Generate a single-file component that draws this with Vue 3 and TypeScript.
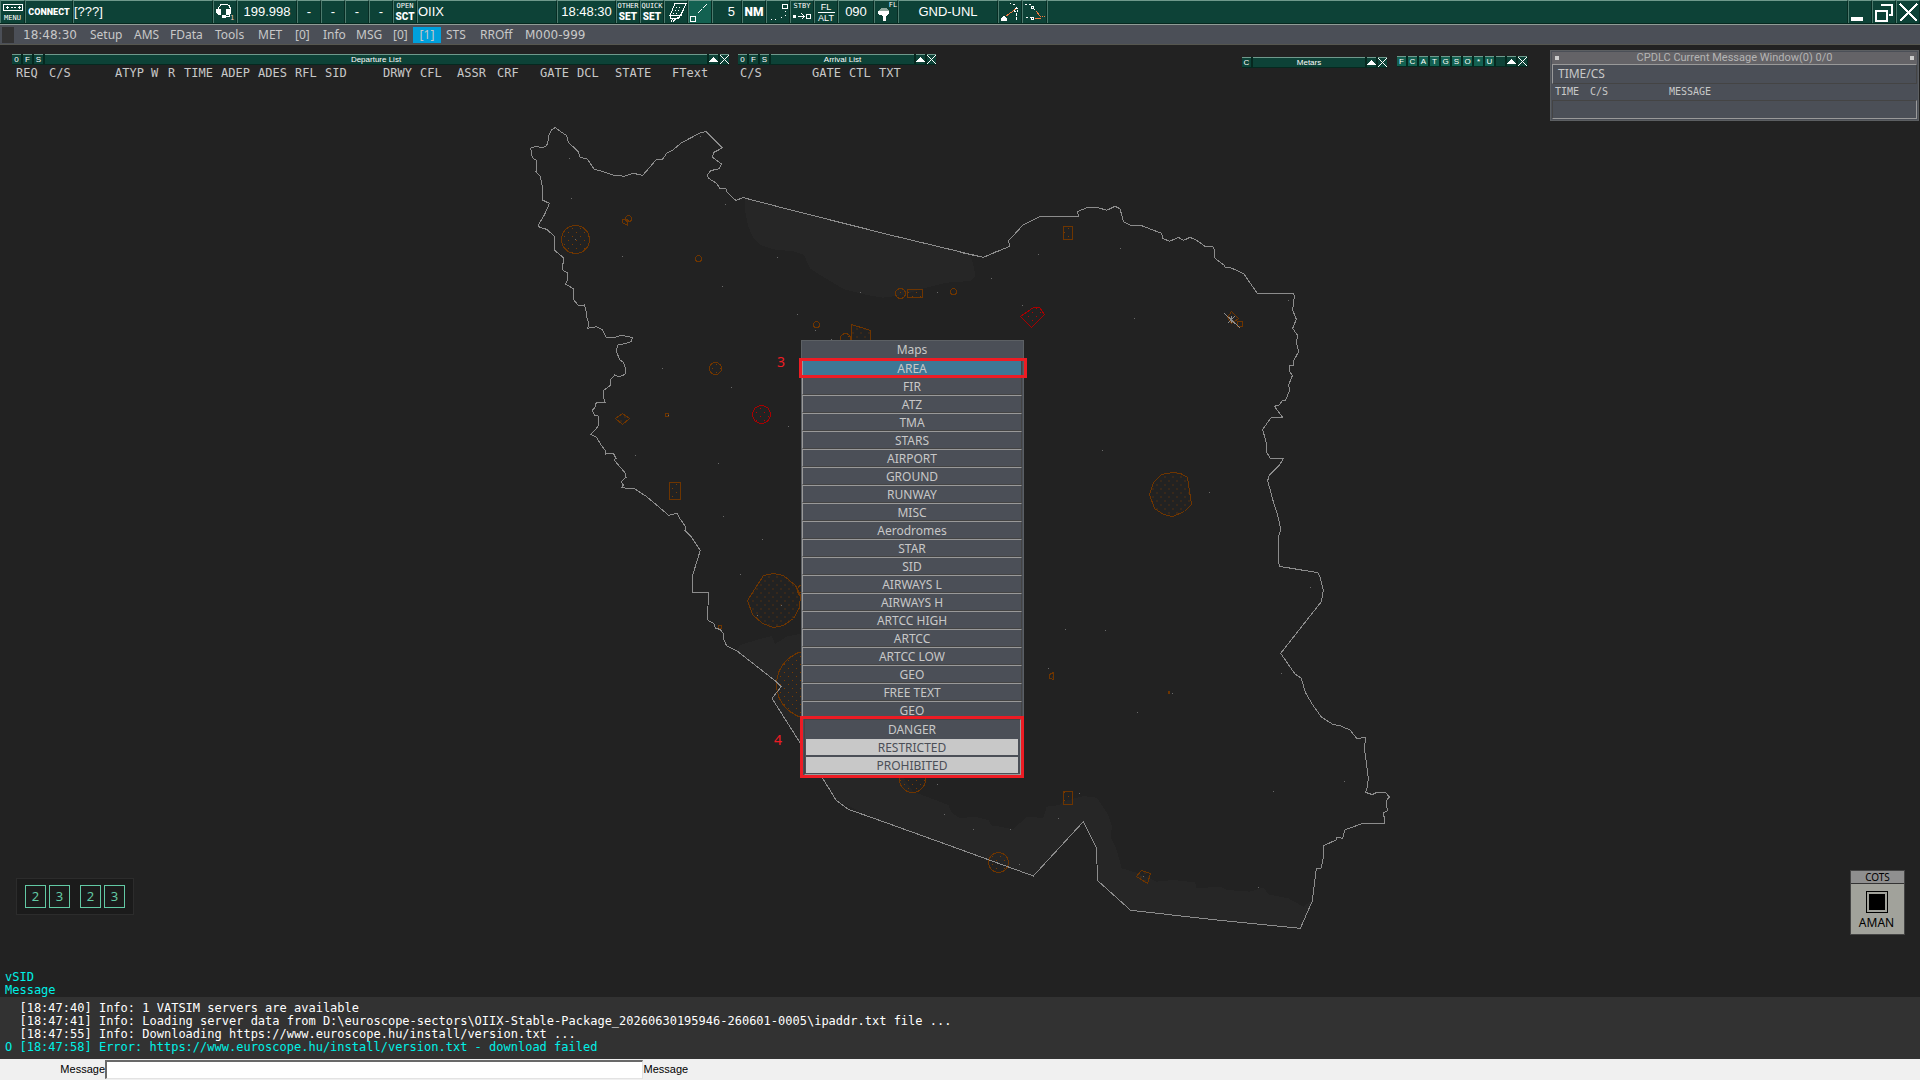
<script setup lang="ts">
import { ref } from 'vue'

interface Tile { x: number; y: number; points: string }

const message = ref('')

const menu = [
  { text: '18:48:30', kind: 'wide' }, { text: 'Setup' }, { text: 'AMS' }, { text: 'FData' },
  { text: 'Tools' }, { text: 'MET' }, { text: '[0]' }, { text: 'Info' }, { text: 'MSG' },
  { text: '[0]' }, { text: '[1]', kind: 'active' }, { text: 'STS' }, { text: 'RROff' },
  { text: 'M000-999', kind: 'wide' },
]

const departureColumns = ['REQ', 'C/S', 'ATYP', 'W', 'R', 'TIME', 'ADEP', 'ADES', 'RFL', 'SID', 'DRWY',
  'CFL', 'ASSR', 'CRF', 'GATE', 'DCL', 'STATE', 'FText']
const arrivalColumns = ['C/S', 'GATE', 'CTL', 'TXT']
const filters = ['F', 'C', 'A', 'T', 'G', 'S', 'O', '*', 'U', '']

const maps = ['AREA', 'FIR', 'ATZ', 'TMA', 'STARS', 'AIRPORT', 'GROUND', 'RUNWAY', 'MISC', 'Aerodromes',
  'STAR', 'SID', 'AIRWAYS L', 'AIRWAYS H', 'ARTCC HIGH', 'ARTCC', 'ARTCC LOW', 'GEO', 'FREE TEXT', 'GEO']
const areas = [
  { text: 'DANGER', on: false }, { text: 'RESTRICTED', on: true }, { text: 'PROHIBITED', on: true },
]

const log = [
  '  [18:47:40] Info: 1 VATSIM servers are available',
  '  [18:47:41] Info: Loading server data from D:\\euroscope-sectors\\OIIX-Stable-Package_20260630195946-260601-0005\\ipaddr.txt file ...',
  '  [18:47:55] Info: Downloading https://www.euroscope.hu/install/version.txt ...',
]

// FIR boundary, stored per chart tile at three units to the pixel
const boundary: Tile[] = [
  { x: 500, y: 110, points: '92,113 113,109 125,114 138,109 143,100 147,75 155,60 166,52 175,60 200,77 205,97 235,125 240,142 262,147 283,178 300,182 340,195 373,199 400,190 428,196 468,150 487,149 500,130 520,119 545,98 600,69 618,64 667,114 640,128 638,142 664,162 658,176 632,182 622,195 626,205 650,220 660,236 678,237 680,245 707,271 730,263 900,307 1187,379 1450,442 1500,420' },
  { x: 500, y: 110, points: '92,113 97,143 110,152 108,185 121,200 127,230 127,270 148,280 144,290 134,313 115,345 118,352 140,358 165,380 163,420 190,443 188,480 204,490 203,510 196,522 222,537 222,570 235,587 253,585 259,605 259,620 267,640 263,655 290,650 308,660 318,682 350,681 366,675 380,680 398,682 393,695 378,700 353,705 349,725 360,750 370,757 378,780 375,793 357,801 344,795 333,808 332,825 310,842 309,855 315,877 289,877 285,892 277,901 283,915 295,918 294,950 272,973 290,982 300,1000 316,1022 317,1032 340,1030 348,1045 342,1050 375,1088 378,1102 364,1115 370,1125 364,1133 405,1137 440,1160 485,1198' },
  { x: 560, y: 440, points: '305,208 326,226 352,220 359,235 378,262 375,272 395,292 421,331 398,405 398,457 445,457 443,540 463,552 466,565 480,568 492,583 492,600 500,618 530,632 645,722 664,740 636,775 720,908 788,1015 828,1080 865,1108 950,1138 1200,1228' },
  { x: 960, y: 560, points: '0,868 220,948 370,785 409,862 413,962 512,1051 780,1081 1021,1105 1057,1023 1069,926 1084,924 1091,885 1091,857 1128,840 1130,832 1148,835 1154,810 1208,790 1274,790 1271,758 1282,753 1279,722 1288,711 1276,697 1250,697 1237,704 1217,697 1222,680 1225,655 1214,570 1216,533 1190,535 1170,510 1140,497 1120,494 1084,471 1057,433 1036,397 1024,355 1005,342 962,280 1084,125 1090,90 1080,50 1073,38 958,19 955,0' },
  { x: 960, y: 180, points: '0,217 70,232 149,199 146,182 188,136 240,109 355,109 353,95 380,83 415,83 440,91 465,79 480,86 485,105 491,126 510,135 542,136 605,160 608,175 629,184 655,172 671,181 690,172 710,181 735,199 758,199 764,210 764,234 792,255 795,262 812,263 851,281 892,340 1001,340 1003,350 998,390 1009,418 998,445 1012,465 1010,490 1016,515 1002,540 1002,556 989,557 990,575 997,587 986,615 989,630 977,660 967,662 958,675 943,679 968,712 934,712 908,748 919,790 919,815 932,837 970,836 960,853 928,885 923,902 940,965 953,1005 962,1048 956,1070 956,1140' },
]

const seas: Tile[] = [
  { x: 500, y: 110, points: '735,265 735,300 745,350 760,385 780,405 820,418 880,424 912,435 930,475 960,495 1030,537 1100,555 1150,563 1210,555 1270,535 1340,518 1410,513 1425,500 1423,475 1410,433 1187,379 900,307' },
  { x: 960, y: 560, points: '-670,272 -660,255 -600,237 -565,228 -555,252 -520,230 -480,222 -140,695 -35,735 -25,758 0,775 45,770 85,780 95,797 120,800 160,808 200,770 250,774 260,740 300,735 310,725 370,708 410,713 445,765 456,800 452,830 470,870 485,925 535,940 590,965 640,960 705,967 710,985 780,980 800,990 870,995 910,982 925,1003 985,1015 1030,1040 1057,1020 1021,1105 780,1081 512,1051 413,962 409,862 370,785 220,948 0,868 -250,778 -372,720 -412,655 -480,548 -564,415 -536,380 -555,362' },
]

const circles = [
  [575, 239, 14], [628, 218, 3], [698, 258, 3], [900, 293, 5], [953, 291, 3], [816, 324, 3], [845, 338, 5],
  [715, 368, 6], [803, 590, 6], [810, 684, 34], [912, 779, 13], [998, 862, 10],
]
const rects = [
  [907, 289, 15, 8], [665, 413, 3, 3], [669, 482, 11, 17], [1063, 226, 9, 13], [1237, 321, 5, 5],
  [718, 625, 3, 3], [1063, 791, 9, 13], [1168, 691, 1, 2],
]
const polygons = [
  '622,219 627,219 627,225 622,222', '851,324 870,330 870,345 851,345', '615,418 622,413 629,418 622,424',
  '1172,472 1180,473 1187,477 1191,504 1184,511 1172,516 1163,514 1154,508 1149,494 1153,482 1161,474',
  '1227,317 1231,311 1238,318 1231,323',
  '747,600 763,575 773,573 783,575 795,585 800,595 799,607 793,618 783,625 773,627 762,623 752,614',
  '1049,674 1053,672 1053,679 1049,678', '1136,876 1141,870 1150,873 1147,883',
]
const fixes = [
  [569, 158], [571, 198], [700, 136], [725, 204], [622, 256], [777, 257], [722, 286], [860, 292], [937, 292],
  [991, 278], [797, 314], [815, 330], [662, 368], [731, 387], [788, 426], [635, 455], [718, 463], [1038, 254],
  [1120, 248], [1022, 305], [1134, 318], [1288, 300], [1102, 450], [1209, 492], [723, 516], [762, 539],
  [740, 574], [757, 615], [781, 605], [937, 784], [944, 814], [1310, 587], [1065, 629], [1105, 630],
  [1281, 673], [1048, 668], [1172, 693], [1137, 712], [1344, 781], [1273, 791], [1079, 793], [1058, 818],
  [973, 829], [1010, 829], [1019, 864], [1258, 887], [1143, 876], [668, 415], [575, 239], [831, 339],
]
</script>

<template>
  <div class="app">
    <header class="toolbar">
      <button class="cell" aria-label="Menu">
        <svg class="ico" viewBox="0 0 24 22"><path d="M2.500 3.500h19v6h-19zM5 6.500h3M10 6.500h2M13 6.500h2M17 6.500h3M6.500 5v3M18.500 5v3" class="w" /></svg>
        <span class="tiny under">MENU</span>
      </button>
      <button class="cell strong">CONNECT</button>
      <button class="cell start">[???]</button>
      <button class="cell" aria-label="Voice">
        <svg class="ico" viewBox="0 0 24 22">
          <path d="M4.500 9V7l2-3 3-1h3l3 2 1 3v2" class="w" />
          <path d="M2 8h5v6H4l-2-2zM12 8h5v4l-2 2h-3z" class="wf" /><path d="M15.500 13v2h-5" class="w" /><path d="M8 14h4v3H8z" class="wf" />
        </svg>
        <span class="tiny badge">1</span>
      </button>
      <button class="cell">199.998</button>
      <button class="cell">-</button>
      <button class="cell">-</button>
      <button class="cell">-</button>
      <button class="cell">-</button>
      <button class="cell stack"><span class="tiny">OPEN</span><b>SCT</b></button>
      <button class="cell start">OIIX</button>
      <button class="cell">18:48:30</button>
      <button class="cell stack"><span class="tiny">OTHER</span><b>SET</b></button>
      <button class="cell stack"><span class="tiny">QUICK</span><b>SET</b></button>
      <button class="cell" aria-label="Clear drawings">
        <svg class="ico" viewBox="0 0 24 22">
          <path d="M10 2.500h11l-5 12H5zM5 14v3h9l6-12M8 17l-2 4M11 17l-3 4M14 16l-4 3" class="w" />
          <path d="M11 6.500h6M10 9.500h6M8 12.500h6" class="w" stroke-dasharray="1 2" />
        </svg>
      </button>
      <button class="cell lit" aria-label="Ruler">
        <svg class="ico" viewBox="0 0 24 22"><path d="M1.500 15.500h5v5h-5z" class="w" /><path d="M9 12 18 3" class="w" stroke-dasharray="6 1 1 1" /></svg>
      </button>
      <button class="cell end">5</button>
      <button class="cell strong big">NM</button>
      <button class="cell" aria-label="History dots">
        <svg class="ico" viewBox="0 0 24 22"><path d="M15.500 3.500h5v4h-5z" class="w" /><path d="M18 10h1v1h-1zM18 14h1v1h-1zM14 16h1v1h-1zM8 18h1v1H8zM4 18h1v1H4z" class="wf" /></svg>
      </button>
      <button class="cell stack">
        <span class="tiny">STBY</span>
        <svg class="row-ico" viewBox="0 0 22 8"><path d="M2 3h3v3H2z" class="wf" /><path d="M7 4.500h6M10.500 1.500l3 3-3 3M15.500 2.500h4v4h-4z" class="w" /></svg>
      </button>
      <button class="cell stack split"><span class="tiny">FL</span><span class="tiny">ALT</span></button>
      <button class="cell">090</button>
      <button class="cell" aria-label="Level filter">
        <svg class="ico" viewBox="0 0 24 22"><path d="M3 10h11v3l-3 2v5H8v-5l-5-2z" class="wf" /><path d="M3 10l3-3h5l3 3z" fill="#8fa89e" /></svg>
        <span class="tiny corner">FL</span>
      </button>
      <button class="cell">GND-UNL</button>
      <button class="cell" aria-label="Route">
        <svg class="ico" viewBox="0 0 24 22"><path d="M2 20v-2l3-4 3 4v2z" class="wf" /><path d="M7 15 17 8" class="o" /><path d="M15.500 7.500h3v3h-3zM17.500 12v8" class="w" stroke-dasharray="3 1" /><path d="M17.500 8V5M16 4l-5-2" class="w" stroke-dasharray="2 2" /></svg>
      </button>
      <button class="cell" aria-label="Conflict">
        <svg class="ico" viewBox="0 0 24 22"><path d="M2 3h6M3 16.500h6M11 8l6 6" class="w" stroke-dasharray="2 2" /><path d="M8.500 5.500h2v2h-2zM8.500 16.500h2v2h-2z" class="w" /><path d="M13 10l4 5M12 17.500h6" class="o" /><path d="M17 15h6" class="o" stroke-dasharray="1 1" /></svg>
      </button>
      <div class="cell"></div>
      <button class="cell" aria-label="Minimise"><svg class="ico" viewBox="0 0 24 22"><path d="M2 16h12v4H2z" class="wf" /></svg></button>
      <button class="cell" aria-label="Restore"><svg class="ico" viewBox="0 0 24 22"><path d="M9 5V4h10v10h-3" class="w thick" /><path d="M3 10h11v10H3z" class="w thick" /></svg></button>
      <button class="cell" aria-label="Close"><svg class="ico" viewBox="0 0 24 22"><path d="M3 3l17 17M20 3 3 20" class="w thick" /></svg></button>
    </header>

    <nav class="menubar">
      <span class="grip"></span>
      <button v-for="(m, i) in menu" :key="i" :class="m.kind">{{ m.text }}</button>
    </nav>

    <main class="radar">
      <svg class="chart" viewBox="0 45 1920 952" preserveAspectRatio="xMidYMin slice" role="img" aria-label="OIIX sector">
        <defs>
          <pattern id="dots" width="8" height="8" patternUnits="userSpaceOnUse">
            <path d="M0 0h1v1H0zM4 4h1v1H4z" fill="#7a3b00" />
          </pattern>
          <pattern id="reddots" width="8" height="8" patternUnits="userSpaceOnUse">
            <path d="M0 0h1v1H0zM4 4h1v1H4z" fill="#b80000" />
          </pattern>
        </defs>
        <polygon v-for="(s, i) in seas" :key="'s' + i" class="sea" :points="s.points" :transform="`translate(${s.x} ${s.y}) scale(.33333)`" />
        <g class="zone">
          <circle v-for="(c, i) in circles" :key="'c' + i" :cx="c[0] + 0.5" :cy="c[1] + 0.5" :r="c[2]" />
          <rect v-for="(r, i) in rects" :key="'r' + i" :x="r[0] + 0.5" :y="r[1] + 0.5" :width="r[2]" :height="r[3]" />
          <polygon v-for="(p, i) in polygons" :key="'p' + i" :points="p" transform="translate(.5 .5)" />
        </g>
        <g class="prohibited">
          <circle cx="761.5" cy="414.500" r="9" />
          <polygon points="1020.500,316.500 1033.500,307.500 1039.500,307.500 1044.500,314.500 1031.500,327.500" />
        </g>
        <polyline v-for="(b, i) in boundary" :key="'b' + i" class="border" :points="b.points" :transform="`translate(${b.x} ${b.y}) scale(.33333)`" />
        <path class="border" d="M1224 313l16 15M1228 323l7-7M1228 317l7 6M1231 316v7" />
        <rect v-for="(f, i) in fixes" :key="'f' + i" class="fix" :x="f[0]" :y="f[1]" width="1" height="1" />
      </svg>

      <section class="list departures">
        <div class="bar">
          <button>0</button><button>F</button><button>S</button>
          <h2>Departure List</h2>
          <button aria-label="Collapse"><svg viewBox="0 0 9 9"><path d="M0 7 4 2h1l4 5z" class="wf" /></svg></button>
          <button aria-label="Close"><svg viewBox="0 0 9 9"><path d="M0 0l9 9M9 0 0 9" class="w" /></svg></button>
        </div>
        <div class="columns"><span v-for="c in departureColumns" :key="c">{{ c }}</span></div>
      </section>

      <section class="list arrivals">
        <div class="bar">
          <button>0</button><button>F</button><button>S</button>
          <h2>Arrival List</h2>
          <button aria-label="Collapse"><svg viewBox="0 0 9 9"><path d="M0 7 4 2h1l4 5z" class="wf" /></svg></button>
          <button aria-label="Close"><svg viewBox="0 0 9 9"><path d="M0 0l9 9M9 0 0 9" class="w" /></svg></button>
        </div>
        <div class="columns"><span v-for="c in arrivalColumns" :key="c">{{ c }}</span></div>
      </section>

      <section class="list metars">
        <div class="bar">
          <button>C</button>
          <h2>Metars</h2>
          <button aria-label="Collapse"><svg viewBox="0 0 9 9"><path d="M0 7 4 2h1l4 5z" class="wf" /></svg></button>
          <button aria-label="Close"><svg viewBox="0 0 9 9"><path d="M0 0l9 9M9 0 0 9" class="w" /></svg></button>
        </div>
      </section>

      <section class="list filters">
        <div class="bar">
          <button v-for="f in filters" :key="f" :class="{ lit: f }">{{ f }}</button>
          <button aria-label="Collapse"><svg viewBox="0 0 9 9"><path d="M0 7 4 2h1l4 5z" class="wf" /></svg></button>
          <button aria-label="Close"><svg viewBox="0 0 9 9"><path d="M0 0l9 9M9 0 0 9" class="w" /></svg></button>
        </div>
      </section>

      <section class="cpdlc">
        <h2><i></i><span>CPDLC Current Message Window(0) 0/0</span><i></i></h2>
        <div class="callsign">TIME/CS</div>
        <div class="heads"><span>TIME</span><span>C/S</span><span>MESSAGE</span></div>
        <div class="reply"></div>
      </section>

      <section class="maps">
        <h2>Maps</h2>
        <button v-for="(m, i) in maps" :key="i" :class="{ current: i === 0 }">{{ m }}</button>
        <div class="areas">
          <button v-for="a in areas" :key="a.text" :class="{ on: a.on }">{{ a.text }}</button>
        </div>
        <span class="outline"></span>
        <span class="step three">3</span>
        <span class="step four">4</span>
      </section>

      <section class="runways">
        <button>2</button><button>3</button><button class="gap">2</button><button>3</button>
      </section>

      <section class="cots">
        <h2>COTS</h2>
        <button><svg viewBox="0 0 22 22"><path d="M.5 .5h21v21H.5z" fill="none" stroke="#000" stroke-width="1" /><path d="M3 3h16v16H3z" /></svg>AMAN</button>
      </section>

      <div class="tabs"><button>vSID</button><button>Message</button></div>
    </main>

    <section class="log">
      <p v-for="l in log" :key="l">{{ l }}</p>
      <p class="error">O [18:47:58] Error: https://www.euroscope.hu/install/version.txt - download failed</p>
    </section>

    <footer class="entry">
      <label for="message">Message</label>
      <input id="message" v-model="message" type="text" autofocus />
      <span>Message</span>
    </footer>
  </div>
</template>

<style>
body { background: #222; }
</style>

<style scoped>
* { box-sizing: border-box; }
button, h2, p { margin: 0; padding: 0; font: inherit; color: inherit; border: 0; background: none; }
svg { display: block; shape-rendering: crispEdges; }
.w { fill: none; stroke: #fff; stroke-width: 1; }
.o { fill: none; stroke: #f07840; stroke-width: 1; }
.wf { fill: #fff; }
.thick { stroke-width: 2; }

.app {
  display: flex;
  flex-direction: column;
  min-height: 100vh;
  background: #222;
  color: #c8c8c8;
  font: 12px/16px "Noto Sans", "Open Sans", sans-serif;
}

.toolbar {
  display: grid;
  grid-template-columns:
    25px 48px 140px 24px 60px 24px 24px 24px 24px 24px 140px 59px 24px 24px 24px 24px
    30px 24px 24px 24px 24px 36px 24px 100px 24px 25px 1fr 24px 24px 24px;
  height: 25px;
  background: #06281f;
  border-bottom: 1px solid #8f9c96;
}
.cell {
  position: relative;
  display: flex;
  align-items: center;
  justify-content: center;
  height: 23px;
  min-width: 0;
  background: #0d4237;
  border-top: 1px solid #6f998c;
  border-left: 1px solid #4d7a6d;
  border-right: 1px solid #072d24;
  color: #fff;
  font: 13px/20px "Liberation Sans", Arial, sans-serif;
  white-space: nowrap;
}
.cell.start { justify-content: flex-start; }
.cell.end { justify-content: flex-end; padding-right: 6px; }
.cell.strong { font: 900 9px/20px Roboto, sans-serif; }
.cell.strong.big { font-size: 12px; }
.cell.lit, .bar .lit { background: #136151; }
.cell.stack { flex-direction: column; justify-content: space-between; padding: 1px 0; }
.cell b { font: 900 10px/11px Roboto, sans-serif; }
.tiny { font: 7px/9px "DejaVu Sans Mono", monospace; }
.ico { position: absolute; left: 0; top: 0; width: 24px; height: 22px; }
.row-ico { width: 22px; height: 8px; margin-bottom: 2px; }
.under { align-self: flex-end; }
.badge { align-self: flex-end; margin-left: 14px; color: #f0c8b8; }
.corner { align-self: flex-start; margin-left: 14px; }
.split .tiny { width: 17px; font: 9px/10px "Liberation Sans", Arial, sans-serif; }
.split .tiny + .tiny { border-top: 1px solid #fff; }

.menubar {
  display: grid;
  grid-template-columns: 21px 67px 44px 36px 45px 43px 37px 28px 33px 37px 20px 33px 34px 45px 1fr;
  align-items: center;
  height: 20px;
  padding-left: 2px;
  background: #4b4f57;
  border-bottom: 1px solid #55564f;
}
.menubar button { text-align: left; white-space: nowrap; }
.menubar .wide { font-family: "DejaVu Sans", sans-serif; }
.menubar .active { width: 28px; background: #00a0dc; text-align: center; }
.grip { width: 12px; height: 16px; background: #333; }

.radar { position: relative; flex: 1; overflow: hidden; }
.chart { position: absolute; inset: 0; width: 100%; height: 100%; }
.sea { fill: #262626; }
.zone { fill: url(#dots); stroke: #6e3500; stroke-width: 1; }
.prohibited { fill: url(#reddots); stroke: #a80000; stroke-width: 1; }
.border { fill: none; stroke: #8c8c8c; stroke-width: 1; vector-effect: non-scaling-stroke; }
.fix { fill: #6a6a6a; }

.list { position: absolute; top: 9px; }
.bar { display: flex; gap: 2px; height: 11px; background: #06281f; }
.bar button, .bar h2 {
  flex: none;
  width: 9px;
  height: 10px;
  background: #0d4237;
  border-top: 1px solid #6f998c;
  color: #fff;
  font: 8px/10px "Liberation Sans", Arial, sans-serif;
  text-align: center;
}
.bar h2 { flex: 1; }
.bar svg { width: 9px; height: 9px; }
.columns {
  display: grid;
  height: 16px;
  font: 12px/16px "DejaVu Sans Mono", monospace;
  white-space: nowrap;
}
.departures { left: 12px; width: 717px; }
.departures .columns {
  padding-left: 4px;
  grid-template-columns: 33px 66px 36px 17px 16px 37px 37px 37px 30px 58px 37px 37px 40px 43px 37px 38px 57px 1fr;
}
.arrivals { left: 738px; width: 198px; }
.arrivals .columns { padding-left: 2px; grid-template-columns: 72px 37px 30px 1fr; }
.metars { left: 1242px; top: 12px; width: 145px; }
.filters { left: 1397px; top: 11px; width: 131px; }

.cpdlc {
  position: absolute;
  right: 1px;
  top: 5px;
  width: 369px;
  padding: 1px;
  background: #4b4f57;
  border: 1px solid #5c5f62;
}
.cpdlc h2 {
  display: flex;
  justify-content: space-between;
  align-items: center;
  height: 12px;
  padding: 0 3px;
  background: #646367;
  color: #b4b4b4;
  font: 11px/12px Roboto, sans-serif;
}
.cpdlc i { width: 4px; height: 4px; background: #ccc; }
.callsign {
  height: 20px;
  padding-left: 5px;
  border: 1px solid #444;
  border-top-color: #999;
  border-left-color: #999;
  line-height: 18px;
}
.heads {
  display: grid;
  grid-template-columns: 35px 79px 1fr;
  padding-left: 3px;
  font: 10px/16px "DejaVu Sans Mono", monospace;
}
.reply { height: 19px; border: 1px solid #444; border-right-color: #999; border-bottom-color: #999; }

.maps {
  position: absolute;
  left: calc(50% - 159px);
  top: 295px;
  width: 223px;
  padding-right: 1px;
  background: #4b4f57;
  border-top: 1px solid #5c6064;
  border-left: 1px solid #5c6064;
  border-right: 1px solid #5c6064;
  text-align: center;
}
.maps h2 { height: 18px; line-height: 18px; }
.maps > button {
  display: block;
  width: 100%;
  height: 18px;
  border: 1px solid #999;
  border-right-color: #444;
  border-bottom-color: #444;
  line-height: 18px;
}
.maps .current { background: #3e7795; }
.areas {
  margin: -3px -2px 0;
  padding: 0 3px 2px;
  position: relative;
  background: #4b4f57;
  border: 3px solid #ed1c24;
}
.areas::after { content: ""; position: absolute; inset: 0 0 0 1px; border: 1px solid #999; border-top-color: #444; border-left-color: #444; pointer-events: none; }
.areas button { display: block; width: 100%; height: 16px; margin-top: 2px; line-height: 17px; }
.areas .on { background: #c8c8c8; color: #4b4f57; }
.outline { position: absolute; left: -3px; top: 17px; width: 228px; height: 20px; border: 3px solid #ed1c24; }
.step { position: absolute; color: #ed1c24; font-size: 14px; line-height: 16px; }
.three { left: -25px; top: 13px; }
.four { left: -28px; top: 391px; }

.runways {
  position: absolute;
  left: 16px;
  bottom: 82px;
  display: flex;
  gap: 3px;
  padding: 6px 8px;
  background: #1b1b1b;
  border: 1px solid #2c2c2c;
}
.runways button { width: 21px; height: 23px; padding-bottom: 2px; border: 1px solid #62c9a4; color: #62c9a4; font-size: 13px; }
.runways .gap { margin-left: 7px; }

.cots {
  position: absolute;
  right: 15px;
  bottom: 62px;
  width: 55px;
  background: #a1a29b;
  border: 1px solid #444;
  color: #000;
  text-align: center;
}
.cots h2 { height: 13px; background: #8f8f8f; border-bottom: 1px solid #333; font-size: 10px; line-height: 12px; }
.cots button { display: block; width: 100%; height: 50px; padding: 6px 2px 0 0; font-size: 12px; line-height: 20px; }
.cots svg { width: 22px; height: 22px; margin: 0 auto; }

.tabs {
  position: absolute;
  left: 5px;
  bottom: 0;
  display: flex;
  flex-direction: column;
  align-items: flex-start;
  color: #00f0e6;
  font: 12px/13px "DejaVu Sans Mono", monospace;
}
.log {
  height: 62px;
  padding: 5px;
  background: #323232;
  color: #fff;
  font: 12px/13px "DejaVu Sans Mono", monospace;
  white-space: pre;
}
.error { color: #00f0e6; }

.entry {
  display: flex;
  align-items: center;
  height: 21px;
  background: #f0f0f0;
  color: #000;
  font: 11px/16px "Liberation Sans", Arial, sans-serif;
}
.entry label { width: 105px; text-align: right; }
.entry label, .entry span { padding-bottom: 2px; }
.entry input {
  width: 28%;
  height: 19px;
  margin-right: 1px;
  padding: 0 1px;
  background: #fff;
  border: 2px solid #696969;
  border-right: 1px solid #e3e3e3;
  border-bottom: 1px solid #e3e3e3;
  outline: 0;
  font: inherit;
}
</style>
